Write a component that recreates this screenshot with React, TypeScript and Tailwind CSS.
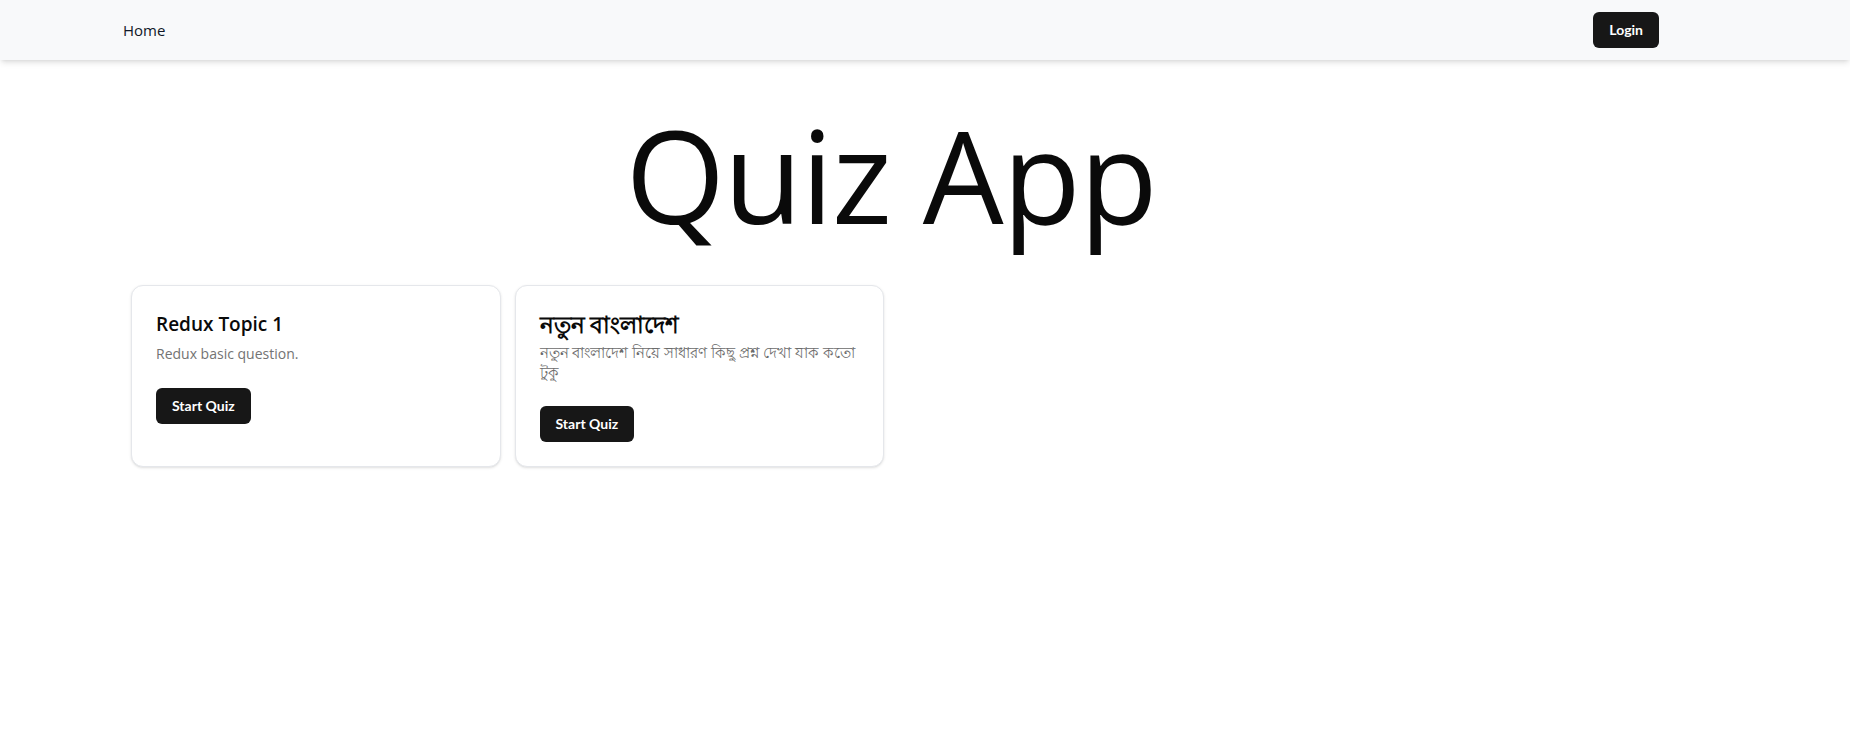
import React from "react";

type Quiz = {
  title: string;
  description: string;
  bangla?: boolean;
};

const quizzes: Quiz[] = [
  { title: "Redux Topic 1", description: "Redux basic question." },
  {
    title: "নতুন বাংলাদেশ",
    description: "নতুন বাংলাদেশ নিয়ে সাধারণ কিছু প্রশ্ন দেখা যাক কতো টুকু",
    bangla: true,
  },
];

function QuizCard({ quiz }: { quiz: Quiz }) {
  return (
    <div className="rounded-xl border border-gray-200 bg-white p-6 shadow-sm">
      <div className={quiz.bangla ? "flex flex-col gap-1" : "flex flex-col gap-1.5"}>
        <h3
          className={
            quiz.bangla
              ? "text-[23px] font-bold leading-7 text-[#0a0a0a]"
              : "text-[19px] font-semibold leading-7 text-[#0a0a0a]"
          }
        >
          {quiz.title}
        </h3>
        <p
          className={
            quiz.bangla
              ? "text-[15px] leading-5 text-[#6b6b6b]"
              : "text-sm leading-5 text-[#737373]"
          }
        >
          {quiz.description}
        </p>
      </div>
      <button className="mt-6 h-9 rounded-md bg-[#171717] px-4 font-['Lato',sans-serif] text-sm font-bold text-white">
        Start Quiz
      </button>
    </div>
  );
}

export default function App() {
  return (
    <div className="min-h-screen bg-white font-['Open_Sans','Noto_Sans',sans-serif] text-[#0a0a0a]">
      <nav className="bg-[#f8f9fa] shadow-md">
        <div className="ml-[123px] flex w-[1536px] items-center justify-between py-3">
          <a className="text-[15px] text-gray-900">Home</a>
          <button className="h-9 rounded-md bg-[#171717] px-4 font-['Lato',sans-serif] text-sm font-bold text-white">
            Login
          </button>
        </div>
      </nav>

      <main className="ml-[123px] w-[1536px]">
        <h1 className="mt-[51px] text-center text-9xl leading-none tracking-[-0.01em]">
          Quiz App
        </h1>
        <div className="mt-[46px] grid grid-cols-4 gap-3.5 px-2">
          {quizzes.map((q) => (
            <QuizCard key={q.title} quiz={q} />
          ))}
        </div>
      </main>
    </div>
  );
}
